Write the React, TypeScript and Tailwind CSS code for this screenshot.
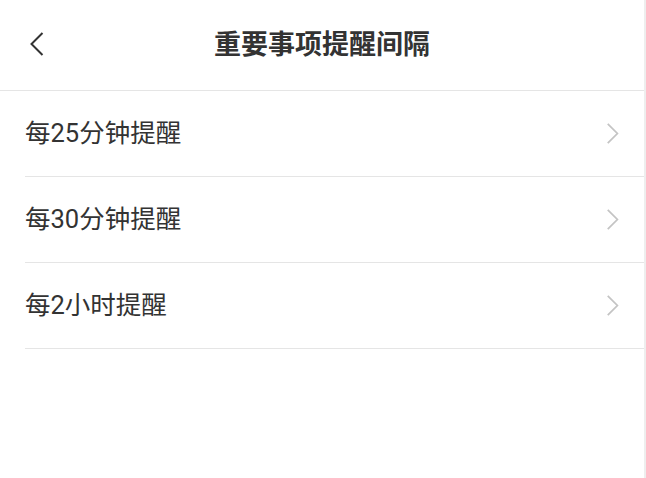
const items = ["每25分钟提醒", "每30分钟提醒", "每2小时提醒"];

function Chevron({ dir, className }: { dir: "left" | "right"; className?: string }) {
  return (
    <svg viewBox="0 0 16 24" className={className} fill="none" stroke="currentColor" strokeWidth={2}>
      {dir === "left" ? <path d="M14 1 3 12l11 11" /> : <path d="M2 1l11 11L2 23" />}
    </svg>
  );
}

export default function App() {
  return (
    <div
      className="flex h-[478px] w-[646px] bg-white text-[#333]"
      style={{ fontFamily: 'Roboto, "Noto Sans CJK SC", sans-serif' }}
    >
      <div className="flex w-[644px] flex-col">
        <header className="relative flex h-[91px] items-center justify-center border-b border-[#e5e5e5]">
          <button className="absolute left-[28px] top-[32px] text-[#333]" aria-label="返回">
            <Chevron dir="left" className="h-[24px] w-[17px]" />
          </button>
          <h1 className="text-[27px] font-bold leading-none">重要事项提醒间隔</h1>
        </header>

        <ul className="pl-[25px]">
          {items.map((t) => (
            <li
              key={t}
              className="flex h-[86px] items-center justify-between border-b border-[#e5e5e5] pr-[24px]"
            >
              <span className="text-[25.5px] leading-none">{t}</span>
              <Chevron dir="right" className="h-[21px] w-[14px] text-[#c4c4c4]" />
            </li>
          ))}
        </ul>
      </div>
      <div className="w-[2px] bg-[#eeeeee]" />
    </div>
  );
}
